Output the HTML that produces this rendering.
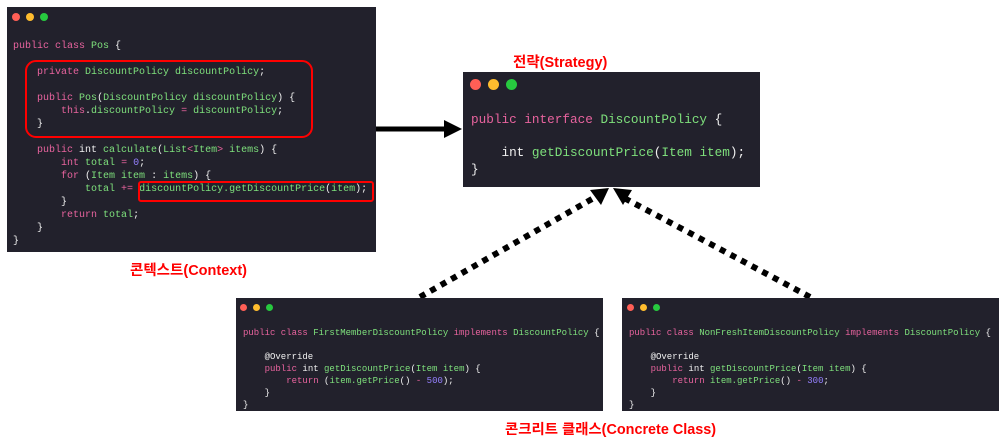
<!DOCTYPE html>
<html><head><meta charset="utf-8"><style>
body{margin:0;width:1005px;height:438px;background:#fff;position:relative;overflow:hidden;font-family:"Liberation Sans","Noto Sans CJK KR",sans-serif}
.box{position:absolute;background:#22212c}
.d{position:absolute;border-radius:50%}
pre{position:absolute;margin:0;font-family:"Liberation Mono",monospace;color:#f0f0f0;white-space:pre}
.k{color:#e8639e}.g{color:#7ee07c}.n{color:#9580ff}
.lbl{position:absolute;color:#f00;font-weight:bold;font-size:14px;white-space:nowrap}
</style></head><body>
<div class="box" style="left:7px;top:7px;width:369px;height:245px"></div>
<div class="d" style="left:12px;top:13px;width:8px;height:8px;background:#ff5f56"></div>
<div class="d" style="left:26px;top:13px;width:8px;height:8px;background:#ffbd2e"></div>
<div class="d" style="left:40px;top:13px;width:8px;height:8px;background:#27c93f"></div>
<pre style="left:13px;top:40px;font-size:10px;line-height:13px"><span class="k">public class</span> <span class="g">Pos</span> {

    <span class="k">private</span> <span class="g">DiscountPolicy discountPolicy</span>;

    <span class="k">public</span> <span class="g">Pos</span>(<span class="g">DiscountPolicy discountPolicy</span>) {
        <span class="k">this</span>.<span class="g">discountPolicy</span> <span class="k">=</span> <span class="g">discountPolicy</span>;
    }

    <span class="k">public</span> int <span class="g">calculate</span>(<span class="g">List</span><span class="k">&lt;</span><span class="g">Item</span><span class="k">&gt;</span> <span class="g">items</span>) {
        <span class="k">int</span> <span class="g">total</span> <span class="k">=</span> <span class="n">0</span>;
        <span class="k">for</span> (<span class="g">Item item</span> : <span class="g">items</span>) {
            <span class="g">total</span> <span class="k">+=</span> <span class="g">discountPolicy.getDiscountPrice</span>(<span class="g">item</span>);
        }
        <span class="k">return</span> <span class="g">total</span>;
    }
}</pre>
<div style="position:absolute;left:25px;top:60px;width:284px;height:74px;border:2px solid #f00;border-radius:11px"></div>
<div style="position:absolute;left:138px;top:181px;width:232px;height:17px;border:2px solid #f00;border-radius:3px"></div>
<div class="lbl" style="left:130px;top:259px;font-size:14.5px">콘텍스트(Context)</div>

<svg style="position:absolute;left:0;top:0" width="1005" height="438">
<line x1="376" y1="129" x2="446" y2="129" stroke="#000" stroke-width="5"/>
<polygon points="444,120 462,129 444,138" fill="#000"/>
<line x1="420" y1="297" x2="592" y2="199" stroke="#000" stroke-width="6" stroke-dasharray="6,6"/>
<polygon points="590,190 609,188 601,205" fill="#000"/>
<line x1="810" y1="297" x2="626" y2="199" stroke="#000" stroke-width="6" stroke-dasharray="6,6"/>
<polygon points="613,188 632,190 623,205" fill="#000"/>
</svg>

<div class="box" style="left:463px;top:72px;width:297px;height:115px"></div>
<div class="d" style="left:470px;top:79px;width:11px;height:11px;background:#ff5f56"></div>
<div class="d" style="left:488px;top:79px;width:11px;height:11px;background:#ffbd2e"></div>
<div class="d" style="left:506px;top:79px;width:11px;height:11px;background:#27c93f"></div>
<pre style="left:471px;top:112px;font-size:12.7px;line-height:16.5px"><span class="k">public interface</span> <span class="g">DiscountPolicy</span> {

    int <span class="g">getDiscountPrice</span>(<span class="g">Item item</span>);
}</pre>
<div class="lbl" style="left:513px;top:51px;font-size:14.5px">전략(Strategy)</div>

<div class="box" style="left:236px;top:298px;width:367px;height:113px"></div>
<div class="d" style="left:240px;top:304px;width:7px;height:7px;background:#ff5f56"></div>
<div class="d" style="left:253px;top:304px;width:7px;height:7px;background:#ffbd2e"></div>
<div class="d" style="left:266px;top:304px;width:7px;height:7px;background:#27c93f"></div>
<pre style="left:243px;top:327px;font-size:9px;line-height:12px"><span class="k">public class</span> <span class="g">FirstMemberDiscountPolicy</span> <span class="k">implements</span> <span class="g">DiscountPolicy</span> {

    @Override
    <span class="k">public</span> int <span class="g">getDiscountPrice</span>(<span class="g">Item item</span>) {
        <span class="k">return</span> (<span class="g">item.getPrice</span>() <span class="k">-</span> <span class="n">500</span>);
    }
}</pre>

<div class="box" style="left:622px;top:298px;width:377px;height:113px"></div>
<div class="d" style="left:627px;top:304px;width:7px;height:7px;background:#ff5f56"></div>
<div class="d" style="left:640px;top:304px;width:7px;height:7px;background:#ffbd2e"></div>
<div class="d" style="left:653px;top:304px;width:7px;height:7px;background:#27c93f"></div>
<pre style="left:629px;top:327px;font-size:9px;line-height:12px"><span class="k">public class</span> <span class="g">NonFreshItemDiscountPolicy</span> <span class="k">implements</span> <span class="g">DiscountPolicy</span> {

    @Override
    <span class="k">public</span> int <span class="g">getDiscountPrice</span>(<span class="g">Item item</span>) {
        <span class="k">return</span> <span class="g">item.getPrice</span>() <span class="k">-</span> <span class="n">300</span>;
    }
}</pre>
<div class="lbl" style="left:505px;top:418px;font-size:14.4px">콘크리트 클래스(Concrete Class)</div>
</body></html>
